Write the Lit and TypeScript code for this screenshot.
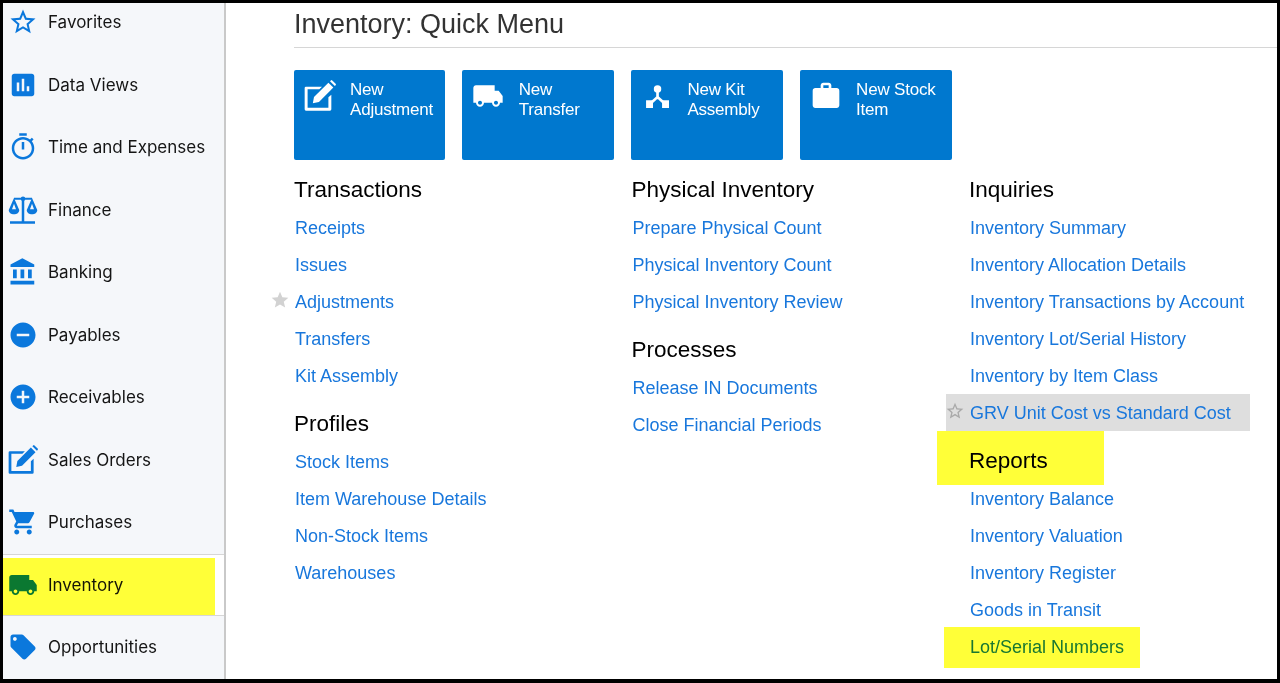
import { html, css, svg, LitElement } from 'lit';
import { customElement } from 'lit/decorators.js';

// material style icon paths, 24x24 box
const ICONS: Record<string, unknown> = {
	star: svg`<path d="M22 9.24l-7.19-.62L12 2 9.19 8.63 2 9.24l5.46 4.73L5.82 21 12 17.27 18.18 21l-1.63-7.03L22 9.24zM12 15.4l-3.76 2.27 1-4.28-3.32-2.88 4.38-.38L12 6.1l1.71 4.04 4.38.38-3.32 2.88 1 4.28L12 15.4z"/>`,
	starFill: svg`<path d="M12 17.27L18.18 21l-1.64-7.03L22 9.24l-7.19-.61L12 2 9.19 8.63 2 9.24l5.46 4.73L5.82 21z"/>`,
	chart: svg`<path d="M19 3H5c-1.1 0-2 .9-2 2v14c0 1.1.9 2 2 2h14c1.1 0 2-.9 2-2V5c0-1.1-.9-2-2-2zM9 17H7v-7h2v7zm4 0h-2V7h2v10zm4 0h-2v-4h2v4z"/>`,
	timer: svg`<path d="M15 1H9v2h6V1zm-4 13h2V8h-2v6zm8.03-6.61l1.42-1.42c-.43-.51-.9-.99-1.41-1.41l-1.42 1.42C16.07 4.74 14.12 4 12 4c-4.97 0-9 4.03-9 9s4.02 9 9 9 9-4.03 9-9c0-2.12-.74-4.07-1.97-5.61zM12 20c-3.87 0-7-3.13-7-7s3.13-7 7-7 7 3.13 7 7-3.13 7-7 7z"/>`,
	scale: svg`<circle cx="12" cy="3" r="1.8"/><path d="M4.800 2.200H11V2h2v.2h6.200v1.600H13V21h8.600v2H1.600v-2H11V3.800H4.800z"/><path fill-rule="evenodd" d="M4.800 2.400L.6 12c0 2.200 1.900 3.400 4.200 3.400S9 14.200 9 12zM4.800 7L3.200 11.400h3.200z"/><path fill-rule="evenodd" d="M19.200 2.400L15 12c0 2.200 1.900 3.400 4.200 3.400s4.200-1.200 4.200-3.400zM19.200 7L17.600 11.400h3.200z"/>`,
	bank: svg`<path d="M4 10v7h3v-7H4zm6 0v7h3v-7h-3zM2 22h19v-3H2v3zm14-12v7h3v-7h-3zm-4.500-9L2 6v2h19V6l-9.500-5z"/>`,
	minus: svg`<path d="M12 2C6.480 2 2 6.480 2 12s4.480 10 10 10 10-4.480 10-10S17.520 2 12 2zm5 11H7v-2h10v2z"/>`,
	plus: svg`<path d="M12 2C6.480 2 2 6.480 2 12s4.480 10 10 10 10-4.480 10-10S17.520 2 12 2zm5 11h-4v4h-2v-4H7v-2h4V7h2v4h4v2z"/>`,
	edit: svg`<path d="M1.500 5H13.500l-2 2H2.700v13.800h15.600V13l2.200-2v11a1 1 0 0 1-1 1h-18a1 1 0 0 1-1-1V6a1 1 0 0 1 1-1z"/><path d="M7.500 12.800L18.300 2l3.700 3.700L11.200 16.500l-4.600 1z"/><path d="M19.500 .9l.6-.6a.8.8 0 0 1 1.100 0l2.500 2.500a.8.8 0 0 1 0 1.100l-.6.6z"/>`,
	cart: svg`<path d="M7 18c-1.100 0-1.990.9-1.990 2S5.900 22 7 22s2-.9 2-2-.9-2-2-2zM1 2v2h2l3.600 7.590-1.350 2.450c-.16.28-.25.61-.25.96 0 1.100.9 2 2 2h12v-2H7.420c-.14 0-.25-.11-.25-.25l.03-.12.9-1.630h7.450c.75 0 1.410-.41 1.750-1.030l3.580-6.490c.08-.14.12-.31.12-.48 0-.55-.45-1-1-1H5.210l-.94-2H1zm16 16c-1.100 0-1.990.9-1.990 2s.89 2 1.990 2 2-.9 2-2-.9-2-2-2z"/>`,
	// solid cab, no window
	truck: svg`<path d="M20 8h-3V4H3c-1.100 0-2 .9-2 2v11h2c0 1.660 1.340 3 3 3s3-1.340 3-3h6c0 1.660 1.340 3 3 3s3-1.340 3-3h2v-5l-3-4zM6 18.500c-.83 0-1.500-.67-1.500-1.500s.67-1.500 1.500-1.500 1.500.67 1.500 1.500-.67 1.500-1.500 1.500zM18 18.500c-.83 0-1.500-.67-1.500-1.500s.67-1.500 1.500-1.500 1.500.67 1.500 1.500-.67 1.500-1.500 1.500z"/>`,
	tag: svg`<path d="M21.410 11.580l-9-9C12.050 2.220 11.550 2 11 2H4c-1.100 0-2 .9-2 2v7c0 .55.22 1.050.59 1.420l9 9c.36.36.86.58 1.410.58.55 0 1.050-.22 1.410-.59l7-7c.37-.36.59-.86.59-1.410 0-.55-.23-1.060-.59-1.420zM5.500 7C4.670 7 4 6.330 4 5.500S4.670 4 5.500 4 7 4.670 7 5.500 6.330 7 5.500 7z"/>`,
	kit: svg`<circle cx="12.400" cy="6.700" r="2.800"/><path d="M11.400 8h2v4.300l5 4.500-1.400 1.500-4.200-3.800h-.8l-4.200 3.800-1.400-1.500 5-4.500z"/><rect x="3.800" y="15.200" width="5.200" height="5.800"/><rect x="15.800" y="15.200" width="5.200" height="5.800"/>`,
	work: svg`<path d="M20 6h-4V4c0-1.110-.89-2-2-2h-4c-1.110 0-2 .89-2 2v2H4c-1.110 0-1.990.89-1.990 2L2 19c0 1.110.89 2 2 2h16c1.110 0 2-.89 2-2V8c0-1.110-.89-2-2-2zm-6 0h-4V4h4v2z"/>`,
};

const icon = (name: string) => html`<svg viewBox="0 0 24 24" fill="currentColor">${ICONS[name]}</svg>`;

const NAV = [
	['star', 'Favorites'],
	['chart', 'Data Views'],
	['timer', 'Time and Expenses'],
	['scale', 'Finance'],
	['bank', 'Banking'],
	['minus', 'Payables'],
	['plus', 'Receivables'],
	['edit', 'Sales Orders'],
	['cart', 'Purchases'],
	['truck', 'Inventory'],
	['tag', 'Opportunities'],
];

const TILES = [
	['edit', 'New', 'Adjustment'],
	['truck', 'New', 'Transfer'],
	['kit', 'New Kit', 'Assembly'],
	['work', 'New Stock', 'Item'],
];

type Link = { text: string; star?: 'fill' | 'outline'; mark?: boolean };
type Section = { title: string; mark?: boolean; links: Link[] };

const l = (text: string): Link => ({ text });

const COLUMNS: Section[][] = [
	[
		{
			title: 'Transactions',
			links: [l('Receipts'), l('Issues'), { text: 'Adjustments', star: 'fill' }, l('Transfers'), l('Kit Assembly')],
		},
		{
			title: 'Profiles',
			links: [l('Stock Items'), l('Item Warehouse Details'), l('Non-Stock Items'), l('Warehouses')],
		},
	],
	[
		{
			title: 'Physical Inventory',
			links: [l('Prepare Physical Count'), l('Physical Inventory Count'), l('Physical Inventory Review')],
		},
		{
			title: 'Processes',
			links: [l('Release IN Documents'), l('Close Financial Periods')],
		},
	],
	[
		{
			title: 'Inquiries',
			links: [
				l('Inventory Summary'),
				l('Inventory Allocation Details'),
				l('Inventory Transactions by Account'),
				l('Inventory Lot/Serial History'),
				l('Inventory by Item Class'),
				{ text: 'GRV Unit Cost vs Standard Cost', star: 'outline' },
			],
		},
		{
			title: 'Reports',
			mark: true,
			links: [
				l('Inventory Balance'),
				l('Inventory Valuation'),
				l('Inventory Register'),
				l('Goods in Transit'),
				{ text: 'Lot/Serial Numbers', mark: true },
			],
		},
	],
];

@customElement('app-root')
export class AppRoot extends LitElement {
	static styles = css`
		:host {
			display: flex;
			box-sizing: border-box;
			width: 1280px;
			height: 683px;
			overflow: hidden;
			background: #fff;
			border-style: solid;
			border-color: #000;
			border-width: 3px 3px 4px 3px;
			font-family: 'Liberation Sans', Arial, sans-serif;
		}
		.sidebar {
			flex: none;
			box-sizing: border-box;
			width: 223px;
			background: #f5f7fa;
			border-right: 2px solid #c9c9c9;
			font-family: Inter, sans-serif;
			font-size: 17px;
			color: #151515;
			overflow: hidden;
		}
		.nav-list {
			margin-top: -12px;
		}
		.nav-item {
			position: relative;
			box-sizing: border-box;
			height: 62.5px;
			display: flex;
			align-items: center;
			gap: 10px;
			padding-left: 5px;
		}
		.nav-item svg {
			flex: none;
			width: 30px;
			height: 30px;
			color: #0b78dc;
		}
		.nav-item.active {
			background: #fff;
			border-top: 1px solid #d6d6d6;
			border-bottom: 1px solid #d6d6d6;
		}
		.nav-mark {
			position: absolute;
			left: 0;
			top: 3px;
			width: 212px;
			height: 57px;
		}
		.mark {
			background: #ffff38;
			mix-blend-mode: multiply;
			pointer-events: none;
		}
		.main {
			flex: 1;
			min-width: 0;
			padding-left: 68px;
		}
		h1 {
			margin: 0;
			height: 44px;
			line-height: 42px;
			font-size: 27px;
			font-weight: 400;
			color: #333;
			border-bottom: 1px solid #d6d6d6;
		}
		.tiles {
			display: flex;
			gap: 16.85px;
			margin: 22px 0 0 -0.4px;
		}
		.tile {
			box-sizing: border-box;
			flex: none;
			width: 151.85px;
			height: 90px;
			padding-top: 10px;
			display: flex;
			background: #0078cf;
			border-radius: 2px;
			color: #fff;
			font-size: 17px;
			line-height: 19.5px;
			letter-spacing: -0.2px;
		}
		.tile svg {
			flex: none;
			width: 32px;
			height: 32px;
			margin: 0 14.4px 0 10px;
		}
		.columns {
			display: grid;
			grid-template-columns: repeat(3, 337.5px);
			margin-top: 15px;
		}
		.section + .section {
			padding-top: 14.5px;
		}
		h2 {
			position: relative;
			margin: 0 0 6.5px;
			height: 28px;
			line-height: 30px;
			font-size: 22.5px;
			font-weight: 400;
			color: #000;
		}
		.heading-mark {
			position: absolute;
			left: -32px;
			top: -15px;
			width: 167px;
			height: 54px;
		}
		.link {
			position: relative;
			height: 37px;
			line-height: 37px;
			padding-left: 1px;
			font-size: 18px;
			color: #1877dc;
		}
		.link svg {
			position: absolute;
			left: -24px;
			top: 6px;
			width: 20px;
			height: 20px;
			color: #d2d2d2;
		}
		.link.outline {
			box-sizing: border-box;
			width: 304px;
			background: #dedede;
			margin: -1px 0 1px -23px;
			padding: 1px 0 0 24px;
		}
		.link.outline svg {
			left: -1px;
			top: 7px;
			color: #a9a9a9;
		}
		.link-mark {
			position: absolute;
			left: -25px;
			top: -1.5px;
			width: 196px;
			height: 41px;
		}
	`;

	renderLink(link: Link) {
		return html`<div class="link ${link.star === 'outline' ? 'outline' : ''}">
			${link.star ? icon(link.star === 'fill' ? 'starFill' : 'star') : ''}${link.text}
			${link.mark ? html`<div class="mark link-mark"></div>` : ''}
		</div>`;
	}

	render() {
		return html`
			<div class="sidebar">
				<div class="nav-list">
					${NAV.map(([ic, label]) => html`
						<div class="nav-item ${label === 'Inventory' ? 'active' : ''}">
							${icon(ic)}<span>${label}</span>
							${label === 'Inventory' ? html`<div class="mark nav-mark"></div>` : ''}
						</div>
					`)}
				</div>
			</div>
			<div class="main">
				<h1>Inventory: Quick Menu</h1>
				<div class="tiles">
					${TILES.map(([ic, a, b]) => html`
						<div class="tile">${icon(ic)}<div>${a}<br />${b}</div></div>
					`)}
				</div>
				<div class="columns">
					${COLUMNS.map((sections) => html`
						<div>
							${sections.map((s) => html`
								<div class="section">
									<h2>${s.title}${s.mark ? html`<div class="mark heading-mark"></div>` : ''}</h2>
									${s.links.map((link) => this.renderLink(link))}
								</div>
							`)}
						</div>
					`)}
				</div>
			</div>
		`;
	}
}
